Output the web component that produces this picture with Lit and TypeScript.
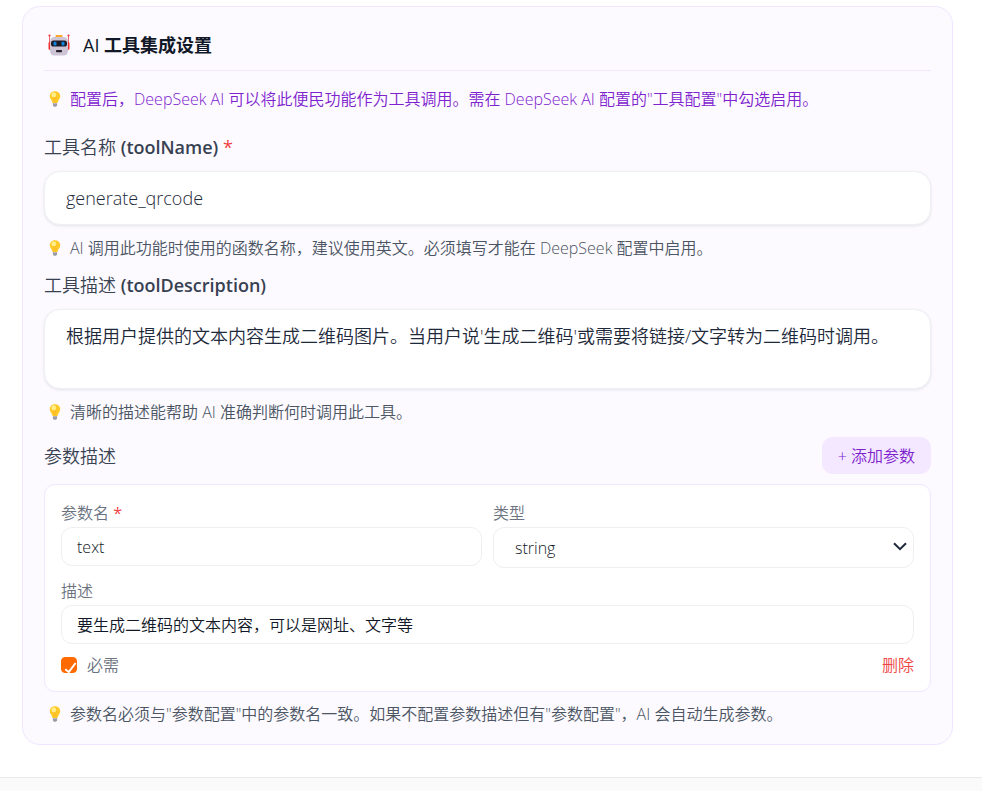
import { LitElement, html, css, svg } from "lit";
import { customElement, state } from "lit/decorators.js";

const bulb = html`<svg class="bulb" viewBox="0 0 12 16" aria-hidden="true">
  <path d="M3.9 11.2h4.2v3.1c0 .9-.8 1.5-2.1 1.5s-2.1-.6-2.1-1.5z" fill="#9a9aa6" />
  <path d="M3.9 12.4h4.2v.7H3.9z" fill="#c5c5d0" />
  <path d="M6 .2C2.8.2.8 2.5.8 5.2c0 2.600 1.900 3.500 2.600 6.300.1.400.4.600.8.600h3.600c.4 0 .7-.2.8-.6.700-2.800 2.600-3.700 2.600-6.300C11.200 2.500 9.200.2 6 .2z" fill="#ffc928" />
  <path d="M4.200 5.600 5.200 6.400v4.600M7.800 5.600 6.800 6.400v4.600" fill="none" stroke="#fdb528" stroke-width=".6" />
  <ellipse cx="4.800" cy="3.800" rx="2.400" ry="2.500" fill="#ffee8a" />
</svg>`;

const robot = html`<svg class="robot" viewBox="0 0 22 22" aria-hidden="true">
  <path d="M1.500 1.500v9M20.500 1.500v9" stroke="#e8686f" stroke-width="1" />
  <circle cx="1.500" cy="1.500" r="1.100" fill="#f0323c" />
  <circle cx="20.500" cy="1.500" r="1.100" fill="#f0323c" />
  <rect x=".5" y="8" width="3" height="8" rx="1.400" fill="#f8312f" />
  <rect x="18.500" y="8" width="3" height="8" rx="1.400" fill="#f8312f" />
  <rect x="7.500" y="1" width="7" height="4" rx=".8" fill="#fca62b" />
  <rect x="2" y="3" width="18" height="18.500" rx="4.500" fill="#cdc4d6" />
  <rect x="3" y="6.500" width="16" height="6" rx="2.600" fill="#1f1b24" />
  <rect x="5.500" y="7.700" width="3" height="3.800" rx="1" fill="#0b84e0" />
  <rect x="13.500" y="7.700" width="3" height="3.800" rx="1" fill="#0b84e0" />
  <rect x="8" y="16" width="6" height="2.200" rx=".8" fill="#26202b" />
</svg>`;

@customElement("app-root")
export class AppRoot extends LitElement {
  @state() private toolName = "generate_qrcode";
  @state() private toolDescription =
    "根据用户提供的文本内容生成二维码图片。当用户说'生成二维码'或需要将链接/文字转为二维码时调用。";

  static styles = css`
    :host {
      display: block;
      min-height: 100vh;
      background: #fff;
      color: #1e293b;
      font: 350 16px/24px "Open Sans", "Noto Sans CJK SC", sans-serif;
    }
    * {
      box-sizing: border-box;
    }
    .page {
      padding: 6px 29px 32px 22px;
    }
    .panel {
      display: flow-root;
      padding: 22px 21px 18px;
      border: 1px solid #f0e6ff;
      border-radius: 18px;
      background: #fcfaff;
    }
    .title {
      display: flex;
      align-items: center;
      gap: 13px;
      margin: 0;
      padding: 0 4px 9px;
      border-bottom: 1px solid #f0e9fe;
      font-size: 18px;
      line-height: 32px;
      font-weight: 700;
      color: #111827;
    }
    .latin {
      font-weight: 400;
    }
    .robot {
      width: 22px;
      height: 22px;
    }
    .hint {
      display: flex;
      align-items: center;
      gap: 9px;
      margin: 11px 0 13px;
      padding-left: 5px;
      color: #4b5563;
    }
    .intro {
      margin: 16px 0 24px;
      color: #7e22ce;
    }
    .bulb {
      flex: none;
      width: 12px;
      height: 16px;
    }
    .label {
      display: block;
      font-size: 18px;
      color: #374151;
    }
    .label b {
      font-weight: 600;
    }
    .req {
      color: #ef4444;
      font-weight: 400;
    }
    input,
    textarea,
    select,
    button {
      display: block;
      margin: 0;
      font: inherit;
      color: inherit;
    }
    .large {
      width: 100%;
      margin-top: 12px;
      padding: 14px 21px;
      border: 1px solid #eef0f3;
      border-radius: 16px;
      background: #fff;
      box-shadow: 0 1px 3px rgb(30 41 59 / 10%);
      font-size: 18px;
      resize: none;
      overflow: hidden;
    }
    textarea.large {
      height: 80px;
    }
    .row {
      display: flex;
      align-items: center;
      justify-content: space-between;
    }
    .add {
      padding: 7px 16px 6px;
      border: 0;
      border-radius: 11px;
      background: #f3e8ff;
      color: #7e22ce;
    }
    .params {
      margin-top: 10px;
      padding: 16px 16px 14px;
      border: 1px solid #f0e6ff;
      border-radius: 11px;
      background: #fff;
      color: #6b7280;
    }
    .columns {
      display: grid;
      grid-template-columns: 1fr 1fr;
      align-items: start;
      gap: 11px;
      margin-bottom: 11px;
    }
    .field {
      display: block;
    }
    .small {
      width: 100%;
      margin-top: 2px;
      padding: 7px 15px 6px;
      border: 1px solid #eeeff2;
      border-radius: 11px;
      background: #fff;
      color: #111827;
    }
    .pick {
      display: block;
      position: relative;
    }
    select.small {
      appearance: none;
      padding: 8px 40px 7px 21px;
    }
    .chevron {
      position: absolute;
      right: 7px;
      top: 15px;
      width: 14px;
      height: 9px;
      pointer-events: none;
    }
    .options {
      margin-top: 9px;
    }
    .check {
      display: flex;
      align-items: center;
      gap: 10px;
    }
    .tick {
      position: relative;
      width: 16px;
      height: 16px;
    }
    .tick input {
      appearance: none;
      width: 16px;
      height: 16px;
      border: 1px solid #d1d5db;
      border-radius: 4px;
      background: #fff;
    }
    .tick input:checked {
      border-color: #ff6b00;
      background: #ff6b00;
    }
    .tick svg {
      position: absolute;
      inset: 0;
      pointer-events: none;
    }
    .remove {
      padding: 0;
      border: 0;
      background: none;
      color: #ef4444;
    }
    .closing {
      margin: 10px 0 0;
    }
    .footer {
      min-height: 14px;
      border-top: 1px solid #e9eaed;
      background: #fafafa;
    }
  `;

  render() {
    return html`
      <main class="page">
        <section class="panel">
          <h3 class="title">${robot}<span><span class="latin">AI</span> 工具集成设置</span></h3>
          <p class="hint intro">${bulb}<span>配置后，DeepSeek AI 可以将此便民功能作为工具调用。需在 DeepSeek AI 配置的"工具配置"中勾选启用。</span></p>

          <label class="label" for="name">工具名称 <b>(toolName)</b> <span class="req">*</span></label>
          <input id="name" class="large" type="text" required .value=${this.toolName}
            @input=${(e: Event) => (this.toolName = (e.target as HTMLInputElement).value)} />
          <p class="hint">${bulb}<span>AI 调用此功能时使用的函数名称，建议使用英文。必须填写才能在 DeepSeek 配置中启用。</span></p>

          <label class="label" for="desc">工具描述 <b>(toolDescription)</b></label>
          <textarea id="desc" class="large" rows="2" .value=${this.toolDescription}
            @input=${(e: Event) => (this.toolDescription = (e.target as HTMLTextAreaElement).value)}></textarea>
          <p class="hint">${bulb}<span>清晰的描述能帮助 AI 准确判断何时调用此工具。</span></p>

          <div class="row">
            <span class="label">参数描述</span>
            <button class="add" type="button">+ 添加参数</button>
          </div>

          <div class="params">
            <div class="columns">
              <label class="field">参数名 <span class="req">*</span>
                <input class="small" type="text" value="text" />
              </label>
              <label class="field">类型
                <span class="pick">
                  <select class="small">
                    <option selected>string</option>
                    <option>number</option>
                    <option>boolean</option>
                  </select>
                  <svg class="chevron" viewBox="0 0 14 9" aria-hidden="true">
                    ${svg`<path d="M1 1.200 7 7.200 13 1.200" fill="none" stroke="#1e293b" stroke-width="2" />`}
                  </svg>
                </span>
              </label>
            </div>
            <label class="field">描述
              <input class="small" type="text" value="要生成二维码的文本内容，可以是网址、文字等" />
            </label>
            <div class="row options">
              <label class="check">
                <span class="tick">
                  <input type="checkbox" checked />
                  <svg viewBox="0 0 16 16" aria-hidden="true"><path d="M4.200 12.200 7.800 15 14.600 6" fill="none" stroke="#fff" stroke-width="2" /></svg>
                </span>
                必需
              </label>
              <button class="remove" type="button">删除</button>
            </div>
          </div>
          <p class="hint closing">${bulb}<span>参数名必须与"参数配置"中的参数名一致。如果不配置参数描述但有"参数配置"，AI 会自动生成参数。</span></p>
        </section>
      </main>
      <footer class="footer"></footer>
    `;
  }
}
